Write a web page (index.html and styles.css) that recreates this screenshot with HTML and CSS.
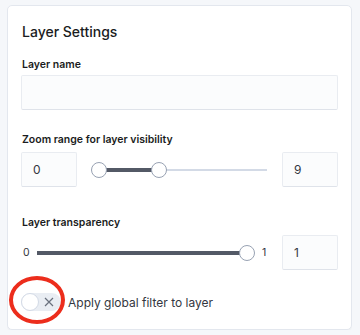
FILE: index.html
```html
<!DOCTYPE html>
<html lang="en">
<head>
    <meta charset="UTF-8">
    <meta name="viewport" content="width=device-width, initial-scale=1.0">
    <title>Layer Settings</title>
    <link rel="stylesheet" href="styles.css">
</head>
<body>
    <div class="panel">
        <h2 class="panel-title">Layer Settings</h2>

        <label class="field-label">Layer name</label>
        <input type="text" class="field-input full" value="">

        <label class="field-label gap-lg">Zoom range for layer visibility</label>
        <div class="range-row">
            <input type="text" class="field-input small" value="0">
            <div class="slider zoom-slider">
                <div class="track"></div>
                <div class="track-fill" style="left: 0%; width: 34%;"></div>
                <div class="thumb" style="left: 0%;"></div>
                <div class="thumb" style="left: 34%;"></div>
            </div>
            <input type="text" class="field-input small" value="9">
        </div>

        <label class="field-label gap-xl">Layer transparency</label>
        <div class="range-row">
            <span class="tick">0</span>
            <div class="slider alpha-slider">
                <div class="track"></div>
                <div class="track-fill" style="left: 0%; width: 100%;"></div>
                <div class="thumb" style="left: 100%;"></div>
            </div>
            <span class="tick right">1</span>
            <input type="text" class="field-input small" value="1">
        </div>

        <div class="toggle-row">
            <span class="switch">
                <span class="knob"></span>
                <svg class="switch-x" width="10" height="10" viewBox="0 0 10 10">
                    <path d="M1 1 L9 9 M9 1 L1 9" stroke="#69707d" stroke-width="1.2" fill="none"/>
                </svg>
            </span>
            <span class="toggle-label">Apply global filter to layer</span>
            <span class="highlight"></span>
        </div>
    </div>
</body>
</html>
```

FILE: styles.css
```css
body {
    font-family: Inter, "Noto Sans", sans-serif;
    background-color: #f5f7fa;
    color: #1a1c21;
    margin: 5px 8px 0 7px;
    padding: 0;
}

.panel {
    background-color: #ffffff;
    border: 1px solid #e3e7ee;
    border-radius: 5px;
    box-shadow: 0 1px 2px rgba(0, 0, 0, 0.04);
    padding: 16px 13px 18px 13px;
}

.panel-title {
    margin: 0;
    font-size: 14px;
    line-height: 20px;
    font-weight: 500;
    padding-left: 1px;
}

.field-label {
    display: block;
    margin-top: 15px;
    font-size: 10.5px;
    line-height: 16px;
    font-weight: 600;
    padding-left: 1px;
}

.field-label.gap-lg {
    margin-top: 22px;
}

.field-label.gap-xl {
    margin-top: 28px;
}

.field-input {
    display: block;
    box-sizing: border-box;
    height: 35px;
    margin-top: 4px;
    padding: 0 11px;
    background-color: #fbfcfd;
    border: 1px solid #e9ecf1;
    border-bottom-color: #dfe3ea;
    border-radius: 2px;
    font-family: inherit;
    font-size: 12px;
    color: #343741;
    outline: none;
}

.field-input.full {
    width: 100%;
    margin-top: 2px;
}

.field-input.small {
    width: 56px;
    flex: none;
    margin-top: 0;
}

.range-row {
    display: flex;
    align-items: center;
    margin-top: 4px;
}

.slider {
    position: relative;
    flex: 1;
    height: 16px;
}

.zoom-slider {
    margin: 0 15px 0 14px;
}

.alpha-slider {
    margin: 0 9px 0 5px;
}

.zoom-slider .thumb {
    margin-left: 0;
}

.track {
    position: absolute;
    left: 0;
    right: 0;
    top: 7px;
    height: 2px;
    background-color: #d3dae6;
}

.track-fill {
    position: absolute;
    top: 6px;
    height: 4px;
    background-color: #535966;
}

.zoom-slider .track-fill {
    margin-left: 8px;
}

.thumb {
    position: absolute;
    top: 0;
    box-sizing: border-box;
    width: 16px;
    height: 16px;
    margin-left: -8px;
    border: 1px solid #98a2b3;
    border-radius: 50%;
    background-color: #ffffff;
}

.tick {
    font-size: 10.5px;
    color: #343741;
    width: 9px;
    padding-left: 2px;
}

.tick.right {
    width: 20px;
    padding-left: 6px;
}

.toggle-row {
    position: relative;
    display: flex;
    align-items: center;
    margin-top: 23px;
}

.switch {
    position: relative;
    display: flex;
    align-items: center;
    justify-content: flex-end;
    box-sizing: border-box;
    width: 40px;
    height: 18px;
    padding-right: 7px;
    border-radius: 9px;
    background-color: #e9edf3;
}

.knob {
    position: absolute;
    left: 0;
    top: 0;
    box-sizing: border-box;
    width: 18px;
    height: 18px;
    border: 1px solid #d3dae6;
    border-radius: 50%;
    background-color: #ffffff;
}

.toggle-label {
    margin-left: 7px;
    font-size: 12px;
    color: #343741;
}

.highlight {
    position: absolute;
    left: -12px;
    top: -17px;
    box-sizing: border-box;
    width: 56px;
    height: 48px;
    border: 4px solid #ec2d1c;
    border-radius: 50%;
}
```
